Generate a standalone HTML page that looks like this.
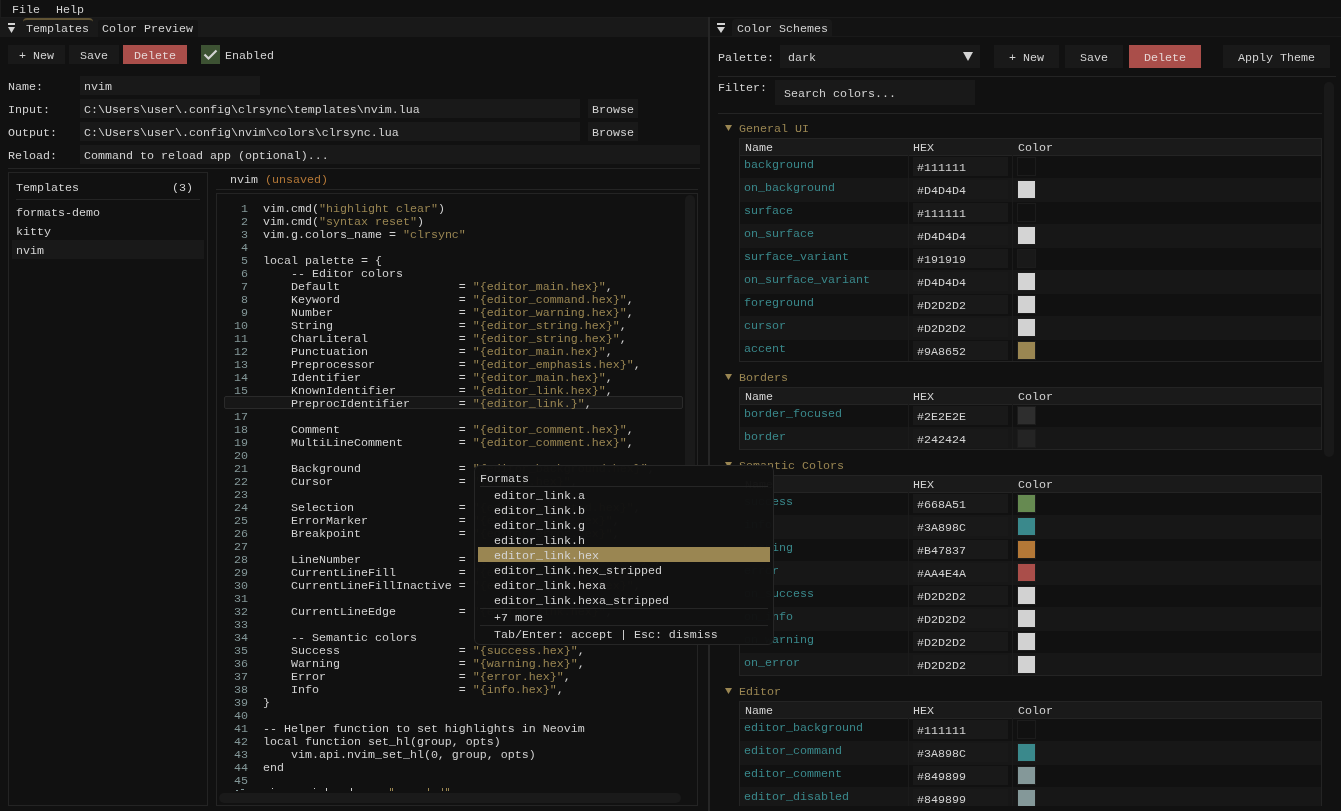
<!DOCTYPE html>
<html><head><meta charset="utf-8"><style>
html,body{margin:0;padding:0;background:#111111;width:1341px;height:811px;overflow:hidden}
body>div,body>svg{position:absolute}
.t{position:absolute;will-change:transform;font-family:"Liberation Mono",monospace;font-size:11.67px;line-height:13px;white-space:pre;color:#D4D4D4}
</style></head><body>
<div style="left:0px;top:0px;width:1341px;height:17px;background:#111111;"></div>
<div style="left:0px;top:0px;width:1px;height:17px;background:#1c1c1c;"></div>
<div style="left:0px;top:17px;width:1341px;height:1px;background:#1c1c1c;"></div>
<div class="t" style="left:12px;top:4px;color:#D4D4D4;">File</div>
<div class="t" style="left:56px;top:4px;color:#D4D4D4;">Help</div>
<div style="left:0px;top:18px;width:708px;height:19px;background:#191919;"></div>
<div style="left:8px;top:23px;width:7px;height:2px;background:#D4D4D4;"></div>
<svg style="left:8px;top:27px" width="8" height="6"><polygon points="0,0 7,0 3.5,6" fill="#D4D4D4"/></svg>
<div style="left:23px;top:18px;width:70px;height:19px;box-sizing:border-box;border-top:2px solid #615434;border-radius:4px 4px 0 0;background:#191919"></div>
<div class="t" style="left:26px;top:23px;color:#D4D4D4;">Templates</div>
<div style="left:98px;top:20px;width:100px;height:17px;background:#141414;border-radius:3px 3px 0 0"></div>
<div class="t" style="left:102px;top:23px;color:#D4D4D4;">Color Preview</div>
<div style="left:708px;top:17px;width:2px;height:794px;background:#262626;"></div>
<div style="left:8px;top:45px;width:57px;height:19px;background:#191919;"></div>
<div class="t" style="left:19px;top:50px;color:#D4D4D4;">+ New</div>
<div style="left:69px;top:45px;width:50px;height:19px;background:#191919;"></div>
<div class="t" style="left:80px;top:50px;color:#D4D4D4;">Save</div>
<div style="left:123px;top:45px;width:64px;height:19px;background:#AA4E4A;"></div>
<div class="t" style="left:134px;top:50px;color:#E6D6D5;">Delete</div>
<div style="left:201px;top:45px;width:19px;height:19px;background:#3d5233;"></div>
<svg style="left:201px;top:45px" width="19" height="19"><polyline points="3.5,9.5 7.5,13.5 15.5,5.5" fill="none" stroke="#D4D4D4" stroke-width="2.2"/></svg>
<div class="t" style="left:225px;top:50px;color:#D4D4D4;">Enabled</div>
<div class="t" style="left:8px;top:81px;color:#D4D4D4;">Name:</div>
<div style="left:80px;top:76px;width:180px;height:19px;background:#191919;"></div>
<div class="t" style="left:84px;top:81px;color:#D4D4D4;">nvim</div>
<div class="t" style="left:8px;top:104px;color:#D4D4D4;">Input:</div>
<div style="left:80px;top:99px;width:500px;height:19px;background:#191919;"></div>
<div class="t" style="left:84px;top:104px;color:#D4D4D4;">C:\Users\user\.config\clrsync\templates\nvim.lua</div>
<div style="left:588px;top:99px;width:50px;height:19px;background:#191919;"></div>
<div class="t" style="left:592px;top:104px;color:#D4D4D4;">Browse</div>
<div class="t" style="left:8px;top:127px;color:#D4D4D4;">Output:</div>
<div style="left:80px;top:122px;width:500px;height:19px;background:#191919;"></div>
<div class="t" style="left:84px;top:127px;color:#D4D4D4;">C:\Users\user\.config\nvim\colors\clrsync.lua</div>
<div style="left:588px;top:122px;width:50px;height:19px;background:#191919;"></div>
<div class="t" style="left:592px;top:127px;color:#D4D4D4;">Browse</div>
<div class="t" style="left:8px;top:150px;color:#D4D4D4;">Reload:</div>
<div style="left:80px;top:145px;width:620px;height:19px;background:#191919;"></div>
<div class="t" style="left:84px;top:150px;color:#D4D4D4;">Command to reload app (optional)...</div>
<div style="left:8px;top:168px;width:692px;height:1px;background:#242424;"></div>
<div style="left:8px;top:172px;width:200px;height:634px;box-sizing:border-box;border:1px solid #242424;background:transparent;"></div>
<div class="t" style="left:16px;top:182px;color:#D4D4D4;">Templates</div>
<div class="t" style="left:172px;top:182px;color:#D4D4D4;">(3)</div>
<div style="left:16px;top:199px;width:184px;height:1px;background:#242424;"></div>
<div class="t" style="left:16px;top:207px;color:#D4D4D4;">formats-demo</div>
<div class="t" style="left:16px;top:226px;color:#D4D4D4;">kitty</div>
<div style="left:12px;top:240px;width:192px;height:19px;background:#191919;"></div>
<div class="t" style="left:16px;top:245px;color:#D4D4D4;">nvim</div>
<div class="t" style="left:230px;top:174px;color:#D4D4D4;">nvim <span style="color:#B47837">(unsaved)</span></div>
<div style="left:216px;top:189px;width:482px;height:1px;background:#242424;"></div>
<div style="left:216px;top:193px;width:482px;height:613px;box-sizing:border-box;border:1px solid #242424;background:transparent;"></div>
<div style="left:224px;top:396px;width:459px;height:13px;box-sizing:border-box;border:1px solid #2a2a2a;border-radius:2px;background:#171717"></div>
<div class="t" style="left:241px;top:203px;color:#849899;">1</div>
<div class="t" style="left:263px;top:203px;color:#D2D2D2;"><span style="color:#D2D2D2">vim.cmd(</span><span style="color:#9A8652">"highlight clear"</span><span style="color:#D2D2D2">)</span></div>
<div class="t" style="left:241px;top:216px;color:#849899;">2</div>
<div class="t" style="left:263px;top:216px;color:#D2D2D2;"><span style="color:#D2D2D2">vim.cmd(</span><span style="color:#9A8652">"syntax reset"</span><span style="color:#D2D2D2">)</span></div>
<div class="t" style="left:241px;top:229px;color:#849899;">3</div>
<div class="t" style="left:263px;top:229px;color:#D2D2D2;"><span style="color:#D2D2D2">vim.g.colors_name = </span><span style="color:#9A8652">"clrsync"</span></div>
<div class="t" style="left:241px;top:242px;color:#849899;">4</div>
<div class="t" style="left:241px;top:255px;color:#849899;">5</div>
<div class="t" style="left:263px;top:255px;color:#D2D2D2;"><span style="color:#D2D2D2">local palette = {</span></div>
<div class="t" style="left:241px;top:268px;color:#849899;">6</div>
<div class="t" style="left:263px;top:268px;color:#D2D2D2;"><span style="color:#D2D2D2">    -- Editor colors</span></div>
<div class="t" style="left:241px;top:281px;color:#849899;">7</div>
<div class="t" style="left:263px;top:281px;color:#D2D2D2;"><span style="color:#D2D2D2">    Default                 = </span><span style="color:#9A8652">"{editor_main.hex}"</span><span style="color:#D2D2D2">,</span></div>
<div class="t" style="left:241px;top:294px;color:#849899;">8</div>
<div class="t" style="left:263px;top:294px;color:#D2D2D2;"><span style="color:#D2D2D2">    Keyword                 = </span><span style="color:#9A8652">"{editor_command.hex}"</span><span style="color:#D2D2D2">,</span></div>
<div class="t" style="left:241px;top:307px;color:#849899;">9</div>
<div class="t" style="left:263px;top:307px;color:#D2D2D2;"><span style="color:#D2D2D2">    Number                  = </span><span style="color:#9A8652">"{editor_warning.hex}"</span><span style="color:#D2D2D2">,</span></div>
<div class="t" style="left:234px;top:320px;color:#849899;">10</div>
<div class="t" style="left:263px;top:320px;color:#D2D2D2;"><span style="color:#D2D2D2">    String                  = </span><span style="color:#9A8652">"{editor_string.hex}"</span><span style="color:#D2D2D2">,</span></div>
<div class="t" style="left:234px;top:333px;color:#849899;">11</div>
<div class="t" style="left:263px;top:333px;color:#D2D2D2;"><span style="color:#D2D2D2">    CharLiteral             = </span><span style="color:#9A8652">"{editor_string.hex}"</span><span style="color:#D2D2D2">,</span></div>
<div class="t" style="left:234px;top:346px;color:#849899;">12</div>
<div class="t" style="left:263px;top:346px;color:#D2D2D2;"><span style="color:#D2D2D2">    Punctuation             = </span><span style="color:#9A8652">"{editor_main.hex}"</span><span style="color:#D2D2D2">,</span></div>
<div class="t" style="left:234px;top:359px;color:#849899;">13</div>
<div class="t" style="left:263px;top:359px;color:#D2D2D2;"><span style="color:#D2D2D2">    Preprocessor            = </span><span style="color:#9A8652">"{editor_emphasis.hex}"</span><span style="color:#D2D2D2">,</span></div>
<div class="t" style="left:234px;top:372px;color:#849899;">14</div>
<div class="t" style="left:263px;top:372px;color:#D2D2D2;"><span style="color:#D2D2D2">    Identifier              = </span><span style="color:#9A8652">"{editor_main.hex}"</span><span style="color:#D2D2D2">,</span></div>
<div class="t" style="left:234px;top:385px;color:#849899;">15</div>
<div class="t" style="left:263px;top:385px;color:#D2D2D2;"><span style="color:#D2D2D2">    KnownIdentifier         = </span><span style="color:#9A8652">"{editor_link.hex}"</span><span style="color:#D2D2D2">,</span></div>
<div class="t" style="left:263px;top:398px;color:#D2D2D2;"><span style="color:#D2D2D2">    PreprocIdentifier       = </span><span style="color:#9A8652">"{editor_link.}"</span><span style="color:#D2D2D2">,</span></div>
<div class="t" style="left:234px;top:411px;color:#849899;">17</div>
<div class="t" style="left:234px;top:424px;color:#849899;">18</div>
<div class="t" style="left:263px;top:424px;color:#D2D2D2;"><span style="color:#D2D2D2">    Comment                 = </span><span style="color:#9A8652">"{editor_comment.hex}"</span><span style="color:#D2D2D2">,</span></div>
<div class="t" style="left:234px;top:437px;color:#849899;">19</div>
<div class="t" style="left:263px;top:437px;color:#D2D2D2;"><span style="color:#D2D2D2">    MultiLineComment        = </span><span style="color:#9A8652">"{editor_comment.hex}"</span><span style="color:#D2D2D2">,</span></div>
<div class="t" style="left:234px;top:450px;color:#849899;">20</div>
<div class="t" style="left:234px;top:463px;color:#849899;">21</div>
<div class="t" style="left:263px;top:463px;color:#D2D2D2;"><span style="color:#D2D2D2">    Background              = </span><span style="color:#9A8652">"{editor_background.hex}"</span><span style="color:#D2D2D2">,</span></div>
<div class="t" style="left:234px;top:476px;color:#849899;">22</div>
<div class="t" style="left:263px;top:476px;color:#D2D2D2;"><span style="color:#D2D2D2">    Cursor                  = </span><span style="color:#9A8652">"{cursor.hex}"</span><span style="color:#D2D2D2">,</span></div>
<div class="t" style="left:234px;top:489px;color:#849899;">23</div>
<div class="t" style="left:234px;top:502px;color:#849899;">24</div>
<div class="t" style="left:263px;top:502px;color:#D2D2D2;"><span style="color:#D2D2D2">    Selection               = </span><span style="color:#9A8652">"{editor_selected.hex}"</span><span style="color:#D2D2D2">,</span></div>
<div class="t" style="left:234px;top:515px;color:#849899;">25</div>
<div class="t" style="left:263px;top:515px;color:#D2D2D2;"><span style="color:#D2D2D2">    ErrorMarker             = </span><span style="color:#9A8652">"{editor_error.hex}"</span><span style="color:#D2D2D2">,</span></div>
<div class="t" style="left:234px;top:528px;color:#849899;">26</div>
<div class="t" style="left:263px;top:528px;color:#D2D2D2;"><span style="color:#D2D2D2">    Breakpoint              = </span><span style="color:#9A8652">"{editor_error.hex}"</span><span style="color:#D2D2D2">,</span></div>
<div class="t" style="left:234px;top:541px;color:#849899;">27</div>
<div class="t" style="left:234px;top:554px;color:#849899;">28</div>
<div class="t" style="left:263px;top:554px;color:#D2D2D2;"><span style="color:#D2D2D2">    LineNumber              = </span><span style="color:#9A8652">"{editor_line_number.hex}"</span><span style="color:#D2D2D2">,</span></div>
<div class="t" style="left:234px;top:567px;color:#849899;">29</div>
<div class="t" style="left:263px;top:567px;color:#D2D2D2;"><span style="color:#D2D2D2">    CurrentLineFill         = </span><span style="color:#9A8652">"{editor_selected.hex}"</span><span style="color:#D2D2D2">,</span></div>
<div class="t" style="left:234px;top:580px;color:#849899;">30</div>
<div class="t" style="left:263px;top:580px;color:#D2D2D2;"><span style="color:#D2D2D2">    CurrentLineFillInactive = </span><span style="color:#9A8652">"{editor_selected.hex}"</span><span style="color:#D2D2D2">,</span></div>
<div class="t" style="left:234px;top:593px;color:#849899;">31</div>
<div class="t" style="left:234px;top:606px;color:#849899;">32</div>
<div class="t" style="left:263px;top:606px;color:#D2D2D2;"><span style="color:#D2D2D2">    CurrentLineEdge         = </span><span style="color:#9A8652">"{editor_link.hex}"</span><span style="color:#D2D2D2">,</span></div>
<div class="t" style="left:234px;top:619px;color:#849899;">33</div>
<div class="t" style="left:234px;top:632px;color:#849899;">34</div>
<div class="t" style="left:263px;top:632px;color:#D2D2D2;"><span style="color:#D2D2D2">    -- Semantic colors</span></div>
<div class="t" style="left:234px;top:645px;color:#849899;">35</div>
<div class="t" style="left:263px;top:645px;color:#D2D2D2;"><span style="color:#D2D2D2">    Success                 = </span><span style="color:#9A8652">"{success.hex}"</span><span style="color:#D2D2D2">,</span></div>
<div class="t" style="left:234px;top:658px;color:#849899;">36</div>
<div class="t" style="left:263px;top:658px;color:#D2D2D2;"><span style="color:#D2D2D2">    Warning                 = </span><span style="color:#9A8652">"{warning.hex}"</span><span style="color:#D2D2D2">,</span></div>
<div class="t" style="left:234px;top:671px;color:#849899;">37</div>
<div class="t" style="left:263px;top:671px;color:#D2D2D2;"><span style="color:#D2D2D2">    Error                   = </span><span style="color:#9A8652">"{error.hex}"</span><span style="color:#D2D2D2">,</span></div>
<div class="t" style="left:234px;top:684px;color:#849899;">38</div>
<div class="t" style="left:263px;top:684px;color:#D2D2D2;"><span style="color:#D2D2D2">    Info                    = </span><span style="color:#9A8652">"{info.hex}"</span><span style="color:#D2D2D2">,</span></div>
<div class="t" style="left:234px;top:697px;color:#849899;">39</div>
<div class="t" style="left:263px;top:697px;color:#D2D2D2;"><span style="color:#D2D2D2">}</span></div>
<div class="t" style="left:234px;top:710px;color:#849899;">40</div>
<div class="t" style="left:234px;top:723px;color:#849899;">41</div>
<div class="t" style="left:263px;top:723px;color:#D2D2D2;"><span style="color:#D2D2D2">-- Helper function to set highlights in Neovim</span></div>
<div class="t" style="left:234px;top:736px;color:#849899;">42</div>
<div class="t" style="left:263px;top:736px;color:#D2D2D2;"><span style="color:#D2D2D2">local function set_hl(group, opts)</span></div>
<div class="t" style="left:234px;top:749px;color:#849899;">43</div>
<div class="t" style="left:263px;top:749px;color:#D2D2D2;"><span style="color:#D2D2D2">    vim.api.nvim_set_hl(0, group, opts)</span></div>
<div class="t" style="left:234px;top:762px;color:#849899;">44</div>
<div class="t" style="left:263px;top:762px;color:#D2D2D2;"><span style="color:#D2D2D2">end</span></div>
<div class="t" style="left:234px;top:775px;color:#849899;">45</div>
<div style="left:272px;top:788px;width:1px;height:1px;background:#D2D2D2;"></div>
<div style="left:314px;top:788px;width:1px;height:1px;background:#D2D2D2;"></div>
<div style="left:326px;top:788px;width:1px;height:3px;background:#D2D2D2;"></div>
<div style="left:351px;top:788px;width:1px;height:3px;background:#D2D2D2;"></div>
<div style="left:390px;top:788px;width:1px;height:3px;background:#9A8652;"></div>
<div style="left:392px;top:788px;width:1px;height:3px;background:#9A8652;"></div>
<div style="left:428px;top:788px;width:1px;height:3px;background:#9A8652;"></div>
<div style="left:442px;top:788px;width:1px;height:3px;background:#9A8652;"></div>
<div style="left:446px;top:788px;width:1px;height:3px;background:#9A8652;"></div>
<div style="left:448px;top:788px;width:1px;height:3px;background:#9A8652;"></div>
<div style="left:236px;top:790px;width:2px;height:1px;background:#849899;"></div>
<div style="left:241px;top:789px;width:3px;height:1px;background:#849899;"></div>
<div style="left:685px;top:195px;width:10px;height:360px;background:#1a1a1a;border-radius:5px"></div>
<div style="left:219px;top:793px;width:462px;height:10px;background:#1a1a1a;border-radius:5px"></div>
<div style="left:710px;top:18px;width:631px;height:18px;background:#131313;"></div>
<div style="left:710px;top:36px;width:631px;height:1px;background:#191919;"></div>
<div style="left:717px;top:23px;width:8px;height:2px;background:#D4D4D4;"></div>
<svg style="left:717px;top:27px" width="9" height="6"><polygon points="0,0 8,0 4,6" fill="#D4D4D4"/></svg>
<div style="left:732px;top:19px;width:100px;height:18px;background:#191919;border-radius:4px 4px 0 0"></div>
<div class="t" style="left:737px;top:23px;color:#D4D4D4;">Color Schemes</div>
<div class="t" style="left:718px;top:52px;color:#D4D4D4;">Palette:</div>
<div style="left:780px;top:45px;width:200px;height:23px;background:#191919;"></div>
<div class="t" style="left:788px;top:52px;color:#D4D4D4;">dark</div>
<svg style="left:963px;top:52px" width="11" height="10"><polygon points="0,0 10,0 5,9" fill="#D4D4D4"/></svg>
<div style="left:994px;top:45px;width:65px;height:23px;background:#191919;"></div>
<div class="t" style="left:1009px;top:52px;color:#D4D4D4;">+ New</div>
<div style="left:1065px;top:45px;width:58px;height:23px;background:#191919;"></div>
<div class="t" style="left:1080px;top:52px;color:#D4D4D4;">Save</div>
<div style="left:1129px;top:45px;width:72px;height:23px;background:#AA4E4A;"></div>
<div class="t" style="left:1144px;top:52px;color:#E6D6D5;">Delete</div>
<div style="left:1223px;top:45px;width:107px;height:23px;background:#191919;"></div>
<div class="t" style="left:1238px;top:52px;color:#D4D4D4;">Apply Theme</div>
<div style="left:718px;top:76px;width:618px;height:1px;background:#242424;"></div>
<div class="t" style="left:718px;top:82px;color:#D4D4D4;">Filter:</div>
<div style="left:775px;top:80px;width:200px;height:25px;background:#191919;"></div>
<div class="t" style="left:784px;top:88px;color:#D4D4D4;">Search colors...</div>
<div style="left:718px;top:113px;width:604px;height:1px;background:#242424;"></div>
<div style="left:1324px;top:82px;width:10px;height:375px;background:#191919;border-radius:5px"></div>
<svg style="left:725px;top:125px" width="8" height="7"><polygon points="0,0 7,0 3.5,6" fill="#9A8652"/></svg>
<div class="t" style="left:739px;top:123px;color:#9A8652;">General UI</div>
<div style="left:739px;top:138px;width:583px;height:17px;background:#1a1a1a;"></div>
<div style="left:739px;top:178px;width:583px;height:24px;background:#171717;"></div>
<div style="left:739px;top:224px;width:583px;height:24px;background:#171717;"></div>
<div style="left:739px;top:270px;width:583px;height:24px;background:#171717;"></div>
<div style="left:739px;top:316px;width:583px;height:24px;background:#171717;"></div>
<div style="left:739px;top:138px;width:583px;height:224px;box-sizing:border-box;border:1px solid #242424;background:transparent;"></div>
<div style="left:739px;top:155px;width:583px;height:1px;background:#242424;"></div>
<div class="t" style="left:745px;top:142px;color:#D4D4D4;">Name</div>
<div class="t" style="left:913px;top:142px;color:#D4D4D4;">HEX</div>
<div class="t" style="left:1018px;top:142px;color:#D4D4D4;">Color</div>
<div style="left:908px;top:155px;width:1px;height:24px;background:#1b1b1b;"></div>
<div style="left:1012px;top:155px;width:1px;height:24px;background:#1b1b1b;"></div>
<div class="t" style="left:744px;top:159px;color:#3A898C;">background</div>
<div style="left:913px;top:157px;width:95px;height:19px;background:#191919;"></div>
<div class="t" style="left:917px;top:162px;color:#D4D4D4;">#111111</div>
<div style="left:1017px;top:157px;width:19px;height:19px;box-sizing:border-box;border:1px solid #1c1c1c;background:#111111"></div>
<div style="left:908px;top:178px;width:1px;height:24px;background:#1b1b1b;"></div>
<div style="left:1012px;top:178px;width:1px;height:24px;background:#1b1b1b;"></div>
<div class="t" style="left:744px;top:182px;color:#3A898C;">on_background</div>
<div style="left:913px;top:180px;width:95px;height:19px;background:#191919;"></div>
<div class="t" style="left:917px;top:185px;color:#D4D4D4;">#D4D4D4</div>
<div style="left:1017px;top:180px;width:19px;height:19px;box-sizing:border-box;border:1px solid #1c1c1c;background:#D4D4D4"></div>
<div style="left:908px;top:201px;width:1px;height:24px;background:#1b1b1b;"></div>
<div style="left:1012px;top:201px;width:1px;height:24px;background:#1b1b1b;"></div>
<div class="t" style="left:744px;top:205px;color:#3A898C;">surface</div>
<div style="left:913px;top:203px;width:95px;height:19px;background:#191919;"></div>
<div class="t" style="left:917px;top:208px;color:#D4D4D4;">#111111</div>
<div style="left:1017px;top:203px;width:19px;height:19px;box-sizing:border-box;border:1px solid #1c1c1c;background:#111111"></div>
<div style="left:908px;top:224px;width:1px;height:24px;background:#1b1b1b;"></div>
<div style="left:1012px;top:224px;width:1px;height:24px;background:#1b1b1b;"></div>
<div class="t" style="left:744px;top:228px;color:#3A898C;">on_surface</div>
<div style="left:913px;top:226px;width:95px;height:19px;background:#191919;"></div>
<div class="t" style="left:917px;top:231px;color:#D4D4D4;">#D4D4D4</div>
<div style="left:1017px;top:226px;width:19px;height:19px;box-sizing:border-box;border:1px solid #1c1c1c;background:#D4D4D4"></div>
<div style="left:908px;top:247px;width:1px;height:24px;background:#1b1b1b;"></div>
<div style="left:1012px;top:247px;width:1px;height:24px;background:#1b1b1b;"></div>
<div class="t" style="left:744px;top:251px;color:#3A898C;">surface_variant</div>
<div style="left:913px;top:249px;width:95px;height:19px;background:#191919;"></div>
<div class="t" style="left:917px;top:254px;color:#D4D4D4;">#191919</div>
<div style="left:1017px;top:249px;width:19px;height:19px;box-sizing:border-box;border:1px solid #1c1c1c;background:#191919"></div>
<div style="left:908px;top:270px;width:1px;height:24px;background:#1b1b1b;"></div>
<div style="left:1012px;top:270px;width:1px;height:24px;background:#1b1b1b;"></div>
<div class="t" style="left:744px;top:274px;color:#3A898C;">on_surface_variant</div>
<div style="left:913px;top:272px;width:95px;height:19px;background:#191919;"></div>
<div class="t" style="left:917px;top:277px;color:#D4D4D4;">#D4D4D4</div>
<div style="left:1017px;top:272px;width:19px;height:19px;box-sizing:border-box;border:1px solid #1c1c1c;background:#D4D4D4"></div>
<div style="left:908px;top:293px;width:1px;height:24px;background:#1b1b1b;"></div>
<div style="left:1012px;top:293px;width:1px;height:24px;background:#1b1b1b;"></div>
<div class="t" style="left:744px;top:297px;color:#3A898C;">foreground</div>
<div style="left:913px;top:295px;width:95px;height:19px;background:#191919;"></div>
<div class="t" style="left:917px;top:300px;color:#D4D4D4;">#D2D2D2</div>
<div style="left:1017px;top:295px;width:19px;height:19px;box-sizing:border-box;border:1px solid #1c1c1c;background:#D2D2D2"></div>
<div style="left:908px;top:316px;width:1px;height:24px;background:#1b1b1b;"></div>
<div style="left:1012px;top:316px;width:1px;height:24px;background:#1b1b1b;"></div>
<div class="t" style="left:744px;top:320px;color:#3A898C;">cursor</div>
<div style="left:913px;top:318px;width:95px;height:19px;background:#191919;"></div>
<div class="t" style="left:917px;top:323px;color:#D4D4D4;">#D2D2D2</div>
<div style="left:1017px;top:318px;width:19px;height:19px;box-sizing:border-box;border:1px solid #1c1c1c;background:#D2D2D2"></div>
<div style="left:908px;top:339px;width:1px;height:22px;background:#1b1b1b;"></div>
<div style="left:1012px;top:339px;width:1px;height:22px;background:#1b1b1b;"></div>
<div class="t" style="left:744px;top:343px;color:#3A898C;">accent</div>
<div style="left:913px;top:341px;width:95px;height:19px;background:#191919;"></div>
<div class="t" style="left:917px;top:346px;color:#D4D4D4;">#9A8652</div>
<div style="left:1017px;top:341px;width:19px;height:19px;box-sizing:border-box;border:1px solid #1c1c1c;background:#9A8652"></div>
<svg style="left:725px;top:374px" width="8" height="7"><polygon points="0,0 7,0 3.5,6" fill="#9A8652"/></svg>
<div class="t" style="left:739px;top:372px;color:#9A8652;">Borders</div>
<div style="left:739px;top:387px;width:583px;height:17px;background:#1a1a1a;"></div>
<div style="left:739px;top:427px;width:583px;height:22px;background:#171717;"></div>
<div style="left:739px;top:387px;width:583px;height:63px;box-sizing:border-box;border:1px solid #242424;background:transparent;"></div>
<div style="left:739px;top:404px;width:583px;height:1px;background:#242424;"></div>
<div class="t" style="left:745px;top:391px;color:#D4D4D4;">Name</div>
<div class="t" style="left:913px;top:391px;color:#D4D4D4;">HEX</div>
<div class="t" style="left:1018px;top:391px;color:#D4D4D4;">Color</div>
<div style="left:908px;top:404px;width:1px;height:24px;background:#1b1b1b;"></div>
<div style="left:1012px;top:404px;width:1px;height:24px;background:#1b1b1b;"></div>
<div class="t" style="left:744px;top:408px;color:#3A898C;">border_focused</div>
<div style="left:913px;top:406px;width:95px;height:19px;background:#191919;"></div>
<div class="t" style="left:917px;top:411px;color:#D4D4D4;">#2E2E2E</div>
<div style="left:1017px;top:406px;width:19px;height:19px;box-sizing:border-box;border:1px solid #1c1c1c;background:#2E2E2E"></div>
<div style="left:908px;top:427px;width:1px;height:22px;background:#1b1b1b;"></div>
<div style="left:1012px;top:427px;width:1px;height:22px;background:#1b1b1b;"></div>
<div class="t" style="left:744px;top:431px;color:#3A898C;">border</div>
<div style="left:913px;top:429px;width:95px;height:19px;background:#191919;"></div>
<div class="t" style="left:917px;top:434px;color:#D4D4D4;">#242424</div>
<div style="left:1017px;top:429px;width:19px;height:19px;box-sizing:border-box;border:1px solid #1c1c1c;background:#242424"></div>
<svg style="left:725px;top:462px" width="8" height="7"><polygon points="0,0 7,0 3.5,6" fill="#9A8652"/></svg>
<div class="t" style="left:739px;top:460px;color:#9A8652;">Semantic Colors</div>
<div style="left:739px;top:475px;width:583px;height:17px;background:#1a1a1a;"></div>
<div style="left:739px;top:515px;width:583px;height:24px;background:#171717;"></div>
<div style="left:739px;top:561px;width:583px;height:24px;background:#171717;"></div>
<div style="left:739px;top:607px;width:583px;height:24px;background:#171717;"></div>
<div style="left:739px;top:653px;width:583px;height:22px;background:#171717;"></div>
<div style="left:739px;top:475px;width:583px;height:201px;box-sizing:border-box;border:1px solid #242424;background:transparent;"></div>
<div style="left:739px;top:492px;width:583px;height:1px;background:#242424;"></div>
<div class="t" style="left:745px;top:479px;color:#D4D4D4;">Name</div>
<div class="t" style="left:913px;top:479px;color:#D4D4D4;">HEX</div>
<div class="t" style="left:1018px;top:479px;color:#D4D4D4;">Color</div>
<div style="left:908px;top:492px;width:1px;height:24px;background:#1b1b1b;"></div>
<div style="left:1012px;top:492px;width:1px;height:24px;background:#1b1b1b;"></div>
<div class="t" style="left:744px;top:496px;color:#3A898C;">success</div>
<div style="left:913px;top:494px;width:95px;height:19px;background:#191919;"></div>
<div class="t" style="left:917px;top:499px;color:#D4D4D4;">#668A51</div>
<div style="left:1017px;top:494px;width:19px;height:19px;box-sizing:border-box;border:1px solid #1c1c1c;background:#668A51"></div>
<div style="left:908px;top:515px;width:1px;height:24px;background:#1b1b1b;"></div>
<div style="left:1012px;top:515px;width:1px;height:24px;background:#1b1b1b;"></div>
<div class="t" style="left:744px;top:519px;color:#3A898C;">info</div>
<div style="left:913px;top:517px;width:95px;height:19px;background:#191919;"></div>
<div class="t" style="left:917px;top:522px;color:#D4D4D4;">#3A898C</div>
<div style="left:1017px;top:517px;width:19px;height:19px;box-sizing:border-box;border:1px solid #1c1c1c;background:#3A898C"></div>
<div style="left:908px;top:538px;width:1px;height:24px;background:#1b1b1b;"></div>
<div style="left:1012px;top:538px;width:1px;height:24px;background:#1b1b1b;"></div>
<div class="t" style="left:744px;top:542px;color:#3A898C;">warning</div>
<div style="left:913px;top:540px;width:95px;height:19px;background:#191919;"></div>
<div class="t" style="left:917px;top:545px;color:#D4D4D4;">#B47837</div>
<div style="left:1017px;top:540px;width:19px;height:19px;box-sizing:border-box;border:1px solid #1c1c1c;background:#B47837"></div>
<div style="left:908px;top:561px;width:1px;height:24px;background:#1b1b1b;"></div>
<div style="left:1012px;top:561px;width:1px;height:24px;background:#1b1b1b;"></div>
<div class="t" style="left:744px;top:565px;color:#3A898C;">error</div>
<div style="left:913px;top:563px;width:95px;height:19px;background:#191919;"></div>
<div class="t" style="left:917px;top:568px;color:#D4D4D4;">#AA4E4A</div>
<div style="left:1017px;top:563px;width:19px;height:19px;box-sizing:border-box;border:1px solid #1c1c1c;background:#AA4E4A"></div>
<div style="left:908px;top:584px;width:1px;height:24px;background:#1b1b1b;"></div>
<div style="left:1012px;top:584px;width:1px;height:24px;background:#1b1b1b;"></div>
<div class="t" style="left:744px;top:588px;color:#3A898C;">on_success</div>
<div style="left:913px;top:586px;width:95px;height:19px;background:#191919;"></div>
<div class="t" style="left:917px;top:591px;color:#D4D4D4;">#D2D2D2</div>
<div style="left:1017px;top:586px;width:19px;height:19px;box-sizing:border-box;border:1px solid #1c1c1c;background:#D2D2D2"></div>
<div style="left:908px;top:607px;width:1px;height:24px;background:#1b1b1b;"></div>
<div style="left:1012px;top:607px;width:1px;height:24px;background:#1b1b1b;"></div>
<div class="t" style="left:744px;top:611px;color:#3A898C;">on_info</div>
<div style="left:913px;top:609px;width:95px;height:19px;background:#191919;"></div>
<div class="t" style="left:917px;top:614px;color:#D4D4D4;">#D2D2D2</div>
<div style="left:1017px;top:609px;width:19px;height:19px;box-sizing:border-box;border:1px solid #1c1c1c;background:#D2D2D2"></div>
<div style="left:908px;top:630px;width:1px;height:24px;background:#1b1b1b;"></div>
<div style="left:1012px;top:630px;width:1px;height:24px;background:#1b1b1b;"></div>
<div class="t" style="left:744px;top:634px;color:#3A898C;">on_warning</div>
<div style="left:913px;top:632px;width:95px;height:19px;background:#191919;"></div>
<div class="t" style="left:917px;top:637px;color:#D4D4D4;">#D2D2D2</div>
<div style="left:1017px;top:632px;width:19px;height:19px;box-sizing:border-box;border:1px solid #1c1c1c;background:#D2D2D2"></div>
<div style="left:908px;top:653px;width:1px;height:22px;background:#1b1b1b;"></div>
<div style="left:1012px;top:653px;width:1px;height:22px;background:#1b1b1b;"></div>
<div class="t" style="left:744px;top:657px;color:#3A898C;">on_error</div>
<div style="left:913px;top:655px;width:95px;height:19px;background:#191919;"></div>
<div class="t" style="left:917px;top:660px;color:#D4D4D4;">#D2D2D2</div>
<div style="left:1017px;top:655px;width:19px;height:19px;box-sizing:border-box;border:1px solid #1c1c1c;background:#D2D2D2"></div>
<svg style="left:725px;top:688px" width="8" height="7"><polygon points="0,0 7,0 3.5,6" fill="#9A8652"/></svg>
<div class="t" style="left:739px;top:686px;color:#9A8652;">Editor</div>
<div style="left:739px;top:701px;width:583px;height:17px;background:#1a1a1a;"></div>
<div style="left:739px;top:741px;width:583px;height:24px;background:#171717;"></div>
<div style="left:739px;top:787px;width:583px;height:19px;background:#171717;"></div>
<div style="left:739px;top:701px;width:583px;height:105px;box-sizing:border-box;border:1px solid #242424;background:transparent;border-bottom:none"></div>
<div style="left:739px;top:718px;width:583px;height:1px;background:#242424;"></div>
<div class="t" style="left:745px;top:705px;color:#D4D4D4;">Name</div>
<div class="t" style="left:913px;top:705px;color:#D4D4D4;">HEX</div>
<div class="t" style="left:1018px;top:705px;color:#D4D4D4;">Color</div>
<div style="left:908px;top:718px;width:1px;height:24px;background:#1b1b1b;"></div>
<div style="left:1012px;top:718px;width:1px;height:24px;background:#1b1b1b;"></div>
<div class="t" style="left:744px;top:722px;color:#3A898C;">editor_background</div>
<div style="left:913px;top:720px;width:95px;height:19px;background:#191919;"></div>
<div class="t" style="left:917px;top:725px;color:#D4D4D4;">#111111</div>
<div style="left:1017px;top:720px;width:19px;height:19px;box-sizing:border-box;border:1px solid #1c1c1c;background:#111111"></div>
<div style="left:908px;top:741px;width:1px;height:24px;background:#1b1b1b;"></div>
<div style="left:1012px;top:741px;width:1px;height:24px;background:#1b1b1b;"></div>
<div class="t" style="left:744px;top:745px;color:#3A898C;">editor_command</div>
<div style="left:913px;top:743px;width:95px;height:19px;background:#191919;"></div>
<div class="t" style="left:917px;top:748px;color:#D4D4D4;">#3A898C</div>
<div style="left:1017px;top:743px;width:19px;height:19px;box-sizing:border-box;border:1px solid #1c1c1c;background:#3A898C"></div>
<div style="left:908px;top:764px;width:1px;height:24px;background:#1b1b1b;"></div>
<div style="left:1012px;top:764px;width:1px;height:24px;background:#1b1b1b;"></div>
<div class="t" style="left:744px;top:768px;color:#3A898C;">editor_comment</div>
<div style="left:913px;top:766px;width:95px;height:19px;background:#191919;"></div>
<div class="t" style="left:917px;top:771px;color:#D4D4D4;">#849899</div>
<div style="left:1017px;top:766px;width:19px;height:19px;box-sizing:border-box;border:1px solid #1c1c1c;background:#849899"></div>
<div style="left:908px;top:787px;width:1px;height:19px;background:#1b1b1b;"></div>
<div style="left:1012px;top:787px;width:1px;height:19px;background:#1b1b1b;"></div>
<div class="t" style="left:744px;top:791px;color:#3A898C;">editor_disabled</div>
<div style="left:913px;top:789px;width:95px;height:19px;background:#191919;"></div>
<div class="t" style="left:917px;top:794px;color:#D4D4D4;">#849899</div>
<div style="left:1017px;top:789px;width:19px;height:19px;box-sizing:border-box;border:1px solid #1c1c1c;background:#849899"></div>
<div style="left:710px;top:806px;width:631px;height:5px;background:#111111;"></div>
<div style="left:474px;top:465px;width:300px;height:180px;box-sizing:border-box;border:1px solid #262626;border-radius:6px;background:rgba(17,17,17,0.98)"></div>
<div class="t" style="left:480px;top:473px;color:#D4D4D4;">Formats</div>
<div style="left:480px;top:486px;width:288px;height:1px;background:#262626;"></div>
<div class="t" style="left:494px;top:490px;color:#D4D4D4;">editor_link.a</div>
<div class="t" style="left:494px;top:505px;color:#D4D4D4;">editor_link.b</div>
<div class="t" style="left:494px;top:520px;color:#D4D4D4;">editor_link.g</div>
<div class="t" style="left:494px;top:535px;color:#D4D4D4;">editor_link.h</div>
<div style="left:478px;top:547px;width:292px;height:15px;background:#9A8652;"></div>
<div class="t" style="left:494px;top:550px;color:#D4D4D4;">editor_link.hex</div>
<div class="t" style="left:494px;top:565px;color:#D4D4D4;">editor_link.hex_stripped</div>
<div class="t" style="left:494px;top:580px;color:#D4D4D4;">editor_link.hexa</div>
<div class="t" style="left:494px;top:595px;color:#D4D4D4;">editor_link.hexa_stripped</div>
<div style="left:480px;top:608px;width:288px;height:1px;background:#262626;"></div>
<div class="t" style="left:494px;top:612px;color:#D4D4D4;">+7 more</div>
<div style="left:480px;top:625px;width:288px;height:1px;background:#262626;"></div>
<div class="t" style="left:494px;top:629px;color:#D4D4D4;">Tab/Enter: accept | Esc: dismiss</div>
</body></html>
